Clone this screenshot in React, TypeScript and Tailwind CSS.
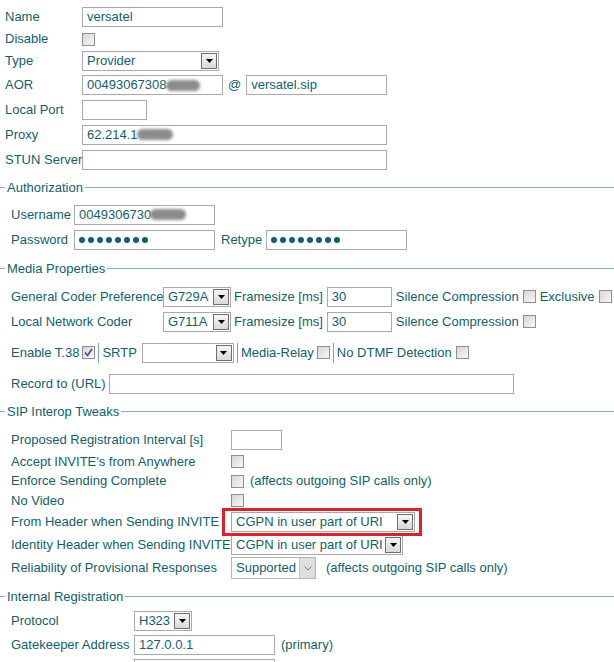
import type { ReactNode } from "react";

function Box({ w, children }: { w: string; children?: ReactNode }) {
  return (
    <div className={`${w} h-[20px] shrink-0 border border-[#a9a9a9] bg-white px-[4px] flex items-center whitespace-nowrap overflow-hidden`}>
      {children}
    </div>
  );
}

function Smudge({ w }: { w: string }) {
  return <span className={`${w} inline-block h-[11px] -ml-[1px] bg-[#8c8c8c] rounded-full blur-[1.5px]`} />;
}

function Check({ on }: { on?: boolean }) {
  return (
    <span className="inline-flex w-[13px] h-[13px] shrink-0 border border-[#8f8f8f] bg-linear-to-br from-[#d6d6d6] to-[#f8f8f8] items-center justify-center">
      {on && (
        <svg width="9" height="9" viewBox="0 0 9 9">
          <path d="M1 4.5 L3.5 7.5 L8 1" stroke="#3a4fa0" strokeWidth="1.6" fill="none" />
        </svg>
      )}
    </span>
  );
}

function Select({ w, value, soft }: { w: string; value: string; soft?: boolean }) {
  if (soft) {
    return (
      <div className={`${w} h-[22px] shrink-0 border border-[#b5b5b5] bg-white flex items-center`}>
        <span className="flex-1 pl-[4px] whitespace-nowrap overflow-hidden">{value}</span>
        <span className="w-[16px] h-[20px] bg-[#dedede] border-l border-[#c8c8c8] flex items-center justify-center">
          <svg width="8" height="5" viewBox="0 0 8 5">
            <path d="M0.5 0.5 L4 4 L7.5 0.5" stroke="#7a7a7a" strokeWidth="1" fill="none" />
          </svg>
        </span>
      </div>
    );
  }
  return (
    <div className={`${w} h-[20px] shrink-0 border border-[#a9a9a9] bg-white flex items-center`}>
      <span className="flex-1 pl-[4px] whitespace-nowrap overflow-hidden">{value}</span>
      <span className="w-[16px] h-[16px] mr-[1px] border border-[#6f6f6f] bg-linear-to-b from-[#f5f5f5] to-[#d9d9d9] flex items-center justify-center">
        <svg width="7" height="4" viewBox="0 0 7 4">
          <path d="M0 0h7L3.5 4z" fill="#000" />
        </svg>
      </span>
    </div>
  );
}

function Dots() {
  return (
    <span className="flex gap-[3px]">
      {Array.from({ length: 8 }).map((_, i) => (
        <span key={i} className="w-[6px] h-[6px] rounded-full bg-[#0f5f6c]" />
      ))}
    </span>
  );
}

function Sep() {
  return <span className="w-px h-[20px] bg-[#7ba3a9] mx-[3px]" />;
}

function Section({ title, children }: { title: string; children: ReactNode }) {
  return (
    <fieldset className="border-t border-[#8aaeb3]">
      <legend className="ml-[5px] px-[2px] leading-[15px]">{title}</legend>
      <div className="pl-[11px]">{children}</div>
    </fieldset>
  );
}

export default function App() {
  return (
    <div className="w-[614px] h-[662px] overflow-hidden bg-white text-[#0f5f6c] text-[13px] whitespace-nowrap font-['Liberation_Sans',Arial,sans-serif]">
      {/* general */}
      <div className="pt-[5px] pl-[5px]">
        <div className="h-[24px] flex items-center">
          <span className="w-[77px] shrink-0">Name</span>
          <Box w="w-[141px]">versatel</Box>
        </div>
        <div className="h-[20px] flex items-center">
          <span className="w-[77px] shrink-0">Disable</span>
          <Check />
        </div>
        <div className="h-[24px] flex items-center">
          <span className="w-[77px] shrink-0">Type</span>
          <Select w="w-[137px]" value="Provider" />
        </div>
        <div className="h-[24px] flex items-center">
          <span className="w-[77px] shrink-0">AOR</span>
          <Box w="w-[141px]">
            00493067308
            <Smudge w="w-[34px]" />
          </Box>
          <span className="mx-[5px]">@</span>
          <Box w="w-[141px]">versatel.sip</Box>
        </div>
        <div className="h-[25px] flex items-center">
          <span className="w-[77px] shrink-0">Local Port</span>
          <Box w="w-[65px]" />
        </div>
        <div className="h-[25px] flex items-center">
          <span className="w-[77px] shrink-0">Proxy</span>
          <Box w="w-[305px]">
            62.214.1
            <Smudge w="w-[36px]" />
          </Box>
        </div>
        <div className="h-[25px] flex items-center">
          <span className="w-[77px] shrink-0">STUN Server</span>
          <Box w="w-[305px]" />
        </div>
      </div>

      <div className="mt-[8px]">
        <Section title="Authorization">
          <div className="pt-[7px]">
            <div className="h-[25px] flex items-center">
              <span className="w-[63px] shrink-0">Username</span>
              <Box w="w-[141px]">
                0049306730
                <Smudge w="w-[36px]" />
              </Box>
            </div>
            <div className="h-[25px] flex items-center">
              <span className="w-[63px] shrink-0">Password</span>
              <Box w="w-[141px]">
                <Dots />
              </Box>
              <span className="ml-[6px] mr-[4px]">Retype</span>
              <Box w="w-[141px]">
                <Dots />
              </Box>
            </div>
          </div>
        </Section>
      </div>

      <div className="mt-[9px]">
        <Section title="Media Properties">
          <div className="pt-[8px]">
            <div className="h-[25px] flex items-center">
              <span className="w-[152px] shrink-0">General Coder Preference</span>
              <Select w="w-[68px]" value="G729A" />
              <span className="ml-[3px] mr-[4px]">Framesize [ms]</span>
              <Box w="w-[65px]">30</Box>
              <span className="ml-[4px] mr-[4px]">Silence Compression</span>
              <Check />
              <span className="ml-[4px] mr-[4px]">Exclusive</span>
              <Check />
            </div>
            <div className="h-[25px] flex items-center">
              <span className="w-[152px] shrink-0">Local Network Coder</span>
              <Select w="w-[68px]" value="G711A" />
              <span className="ml-[3px] mr-[4px]">Framesize [ms]</span>
              <Box w="w-[65px]">30</Box>
              <span className="ml-[4px] mr-[4px]">Silence Compression</span>
              <Check />
            </div>
            <div className="h-[25px] mt-[6px] flex items-center">
              <span className="mr-[3px]">Enable T.38</span>
              <Check on />
              <Sep />
              <span className="mr-[5px]">SRTP</span>
              <Select w="w-[92px]" value="" />
              <Sep />
              <span className="mr-[3px]">Media-Relay</span>
              <Check />
              <Sep />
              <span className="mr-[4px]">No DTMF Detection</span>
              <Check />
            </div>
            <div className="h-[25px] mt-[6px] flex items-center">
              <span className="mr-[3px]">Record to (URL)</span>
              <Box w="w-[405px]" />
            </div>
          </div>
        </Section>
      </div>

      <div className="mt-[8px]">
        <Section title="SIP Interop Tweaks">
          <div className="pt-[8px]">
            <div className="h-[25px] flex items-center">
              <span className="w-[220px] shrink-0">Proposed Registration Interval [s]</span>
              <Box w="w-[51px]" />
            </div>
            <div className="h-[19px] flex items-center">
              <span className="w-[220px] shrink-0">Accept INVITE's from Anywhere</span>
              <Check />
            </div>
            <div className="h-[20px] flex items-center">
              <span className="w-[220px] shrink-0">Enforce Sending Complete</span>
              <Check />
              <span className="ml-[6px]">(affects outgoing SIP calls only)</span>
            </div>
            <div className="h-[19px] flex items-center">
              <span className="w-[220px] shrink-0">No Video</span>
              <Check />
            </div>
            <div className="h-[24px] flex items-center">
              <span className="w-[220px] shrink-0">From Header when Sending INVITE</span>
              <div className="relative">
                <Select w="w-[184px]" value="CGPN in user part of URI" />
                <span className="absolute -left-[9px] -right-[7px] -top-[4px] -bottom-[4px] border-[3px] border-[#e31e24]" />
              </div>
            </div>
            <div className="h-[22px] flex items-center">
              <span className="w-[220px] shrink-0">Identity Header when Sending INVITE</span>
              <Select w="w-[172px]" value="CGPN in user part of URI" />
            </div>
            <div className="h-[24px] flex items-center">
              <span className="w-[220px] shrink-0">Reliability of Provisional Responses</span>
              <Select w="w-[85px]" value="Supported" soft />
              <span className="ml-[10px]">(affects outgoing SIP calls only)</span>
            </div>
          </div>
        </Section>
      </div>

      <div className="mt-[9px]">
        <Section title="Internal Registration">
          <div className="pt-[4px]">
            <div className="h-[25px] flex items-center">
              <span className="w-[123px] shrink-0">Protocol</span>
              <Select w="w-[58px]" value="H323" />
            </div>
            <div className="h-[24px] flex items-center">
              <span className="w-[123px] shrink-0">Gatekeeper Address</span>
              <Box w="w-[141px]">127.0.0.1</Box>
              <span className="ml-[6px]">(primary)</span>
            </div>
            <div className="h-[25px] flex items-start pt-[2px]">
              <span className="w-[123px] shrink-0" />
              <Box w="w-[141px]" />
            </div>
          </div>
        </Section>
      </div>
    </div>
  );
}
